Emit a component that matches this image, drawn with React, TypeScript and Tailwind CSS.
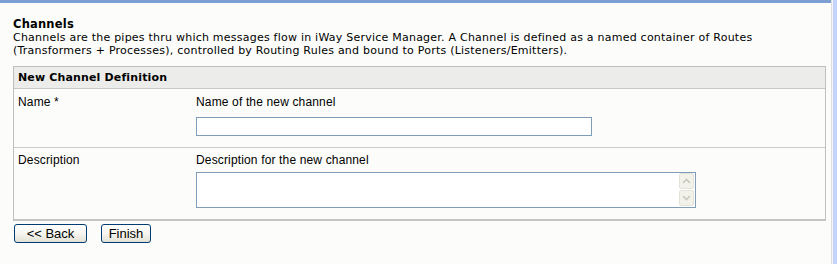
import React from "react";

const verdana = "font-['DejaVu_Sans',Verdana,sans-serif]";
const arial = "font-['Liberation_Sans',Arial,sans-serif]";

const XpButton = ({ label, width }: { label: string; width: string }) => (
  <button
    className={`${arial} ${width} h-[19px] text-[13px] leading-[17px] text-black border border-[#003c74] rounded-[3px] bg-gradient-to-b from-white via-[#f6f5f0] to-[#e3e1d6]`}
  >
    {label}
  </button>
);

const ScrollArrow = ({ up }: { up?: boolean }) => (
  <div className="w-[15px] h-[16px] bg-[#f2f1ea] border border-[#e4e3da] rounded-[2px] flex items-center justify-center">
    <svg width="9" height="6" viewBox="0 0 9 6">
      <path
        d={up ? "M1 5 L4.5 1.5 L8 5" : "M1 1 L4.5 4.5 L8 1"}
        fill="none"
        stroke="#c9c8bf"
        strokeWidth="1.6"
      />
    </svg>
  </div>
);

export default function App() {
  return (
    <div className="w-[837px] h-[264px] flex bg-[#fcfdfb] overflow-hidden">
      <div className="w-[831px] flex flex-col">
        <div className="h-[3px] bg-[#7c9fd3]" />
        <div className="pl-[13px] pt-[14px]">
          <h1 className={`${verdana} text-[11.5px] leading-[14px] font-bold text-black tracking-[0.2px]`}>Channels</h1>
          <p className={`${verdana} text-[11px] leading-[13px] text-black tracking-[0.23px]`}>
            Channels are the pipes thru which messages flow in iWay Service Manager. A Channel is defined as a named container of Routes
            <br />
            (Transformers + Processes), controlled by Routing Rules and bound to Ports (Listeners/Emitters).
          </p>

          <div className="mt-[9px] w-[813px] border border-[#bfbfbf] border-b-2 border-b-[#c4c4c4]">
            <div
              className={`${verdana} bg-[#ececea] border-b border-[#c8c8c8] px-[4px] py-[4px] text-[11px] leading-[13px] font-bold text-black tracking-[0.15px]`}
            >
              New Channel Definition
            </div>

            <div className={`${arial} grid grid-cols-[182px_1fr] border-b border-[#cbcbcb] pt-[6px] pb-[11px] text-[12px] leading-[14px] text-black tracking-[0.15px]`}>
              <div className="pl-[4px]">Name *</div>
              <div className="flex flex-col">
                <span>Name of the new channel</span>
                <input
                  type="text"
                  className="mt-[8px] w-[396px] h-[19px] border border-[#7f9db9] bg-white outline-none"
                />
              </div>
            </div>

            <div className={`${arial} grid grid-cols-[182px_1fr] pt-[5px] pb-[11px] text-[12px] leading-[14px] text-black tracking-[0.15px]`}>
              <div className="pl-[4px]">Description</div>
              <div className="flex flex-col">
                <span>Description for the new channel</span>
                <div className="relative mt-[5px] w-[500px] h-[36px]">
                  <textarea className="w-full h-full border border-[#7f9db9] bg-white resize-none outline-none overflow-hidden" />
                  <div className="absolute right-[2px] top-[1px] flex flex-col gap-[1px]">
                    <ScrollArrow up />
                    <ScrollArrow />
                  </div>
                </div>
              </div>
            </div>
          </div>

          <div className="mt-[3px] ml-[1px] flex gap-[14px]">
            <XpButton label="<< Back" width="w-[73px]" />
            <XpButton label="Finish" width="w-[50px]" />
          </div>
        </div>
      </div>
      <div className="w-px bg-[#dedede]" />
      <div className="w-px bg-[#f4f6fb]" />
      <div className="w-[4px] bg-[#c3d3fb]" />
    </div>
  );
}
